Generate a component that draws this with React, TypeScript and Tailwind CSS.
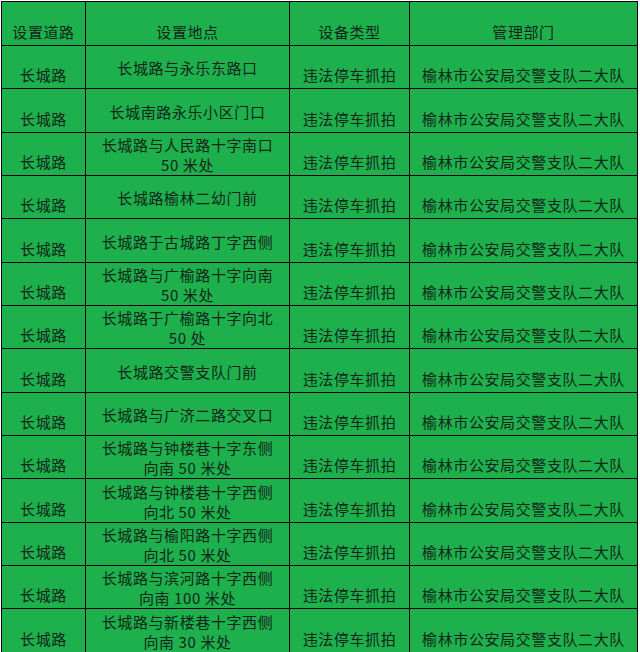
import React from "react";

const rows: string[][] = [
  ["长城路与永乐东路口"],
  ["长城南路永乐小区门口"],
  ["长城路与人民路十字南口", "50 米处"],
  ["长城路榆林二幼门前"],
  ["长城路于古城路丁字西侧"],
  ["长城路与广榆路十字向南", "50 米处"],
  ["长城路于广榆路十字向北", "50 处"],
  ["长城路交警支队门前"],
  ["长城路与广济二路交叉口"],
  ["长城路与钟楼巷十字东侧", "向南 50 米处"],
  ["长城路与钟楼巷十字西侧", "向北 50 米处"],
  ["长城路与榆阳路十字西侧", "向北 50 米处"],
  ["长城路与滨河路十字西侧", "向南 100 米处"],
  ["长城路与新楼巷十字西侧", "向南 30 米处"],
];

const font = { fontFamily: '"Noto Sans CJK SC", "Noto Sans", sans-serif' };

export default function App() {
  return (
    <div className="w-[640px] h-[652px] overflow-hidden bg-white pt-px pl-px">
      <div
        className="grid w-[637px] gap-px bg-black p-px grid-cols-[83px_203px_119px_227px] grid-rows-[43px_42px_43px_42px_42px_43px_42px_42px_43px_42px_42px_43px_42px_42px_43px] text-[15px] leading-[20px] text-[#14261a] tracking-[0.6px]"
        style={font}
      >
        <div className="bg-[#1eb04c] flex items-end justify-center pb-[3px]">设置道路</div>
        <div className="bg-[#1eb04c] flex items-end justify-center pb-[3px]">设置地点</div>
        <div className="bg-[#1eb04c] flex items-end justify-center pb-[3px]">设备类型</div>
        <div className="bg-[#1eb04c] flex items-end justify-center pb-[3px]">管理部门</div>
        {rows.map((r, i) => (
          <React.Fragment key={i}>
            <div className="bg-[#1eb04c] flex items-end justify-center pb-[3px]">长城路</div>
            <div className="bg-[#1eb04c] flex flex-col items-center justify-center pt-[2px]">
              {r.map((line, j) => (
                <div key={j} className="whitespace-pre">{line}</div>
              ))}
            </div>
            <div className="bg-[#1eb04c] flex items-end justify-center pb-[3px]">违法停车抓拍</div>
            <div className="bg-[#1eb04c] flex items-end justify-center pb-[3px] whitespace-nowrap">
              榆林市公安局交警支队二大队
            </div>
          </React.Fragment>
        ))}
      </div>
    </div>
  );
}
